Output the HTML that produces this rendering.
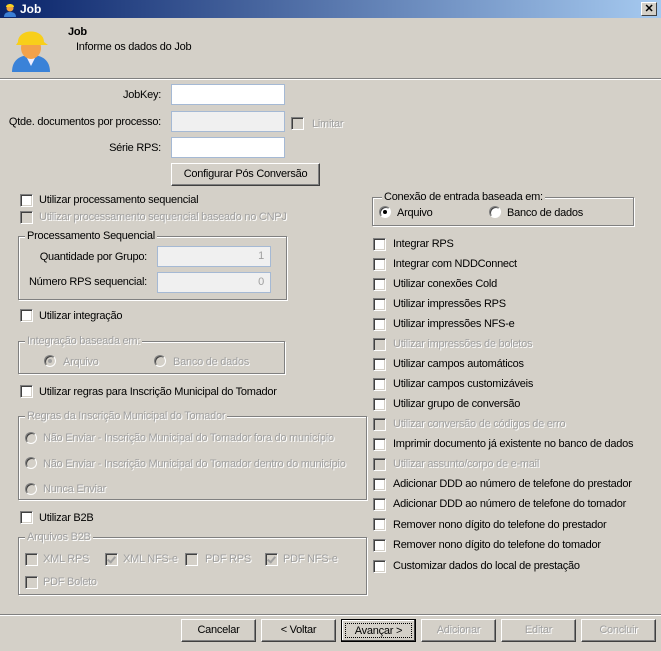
<!DOCTYPE html>
<html><head><meta charset="utf-8"><style>
*{box-sizing:border-box;margin:0;padding:0}
body{width:661px;height:651px;background:#d4d0c8;font-family:"Liberation Sans",Tahoma,sans-serif;font-size:11px;letter-spacing:-0.25px;color:#000;position:relative;overflow:hidden}
.a{position:absolute;white-space:nowrap;line-height:14px}
.dis{color:#a0a0a0;text-shadow:1px 1px #fff}
.cb{position:absolute;width:13px;height:13px;background:#fff;border:1px solid;border-color:#808080 #fff #fff #808080;box-shadow:inset 1px 1px #404040,inset -1px -1px #d4d0c8}
.cb.d{background:#d4d0c8}
.cb.chk::after{content:"";position:absolute;left:3px;top:1px;width:3px;height:6px;border:solid #a0a0a0;border-width:0 2px 2px 0;transform:rotate(40deg)}
.rb{position:absolute;width:12px;height:12px;border-radius:50%;background:#fff;border:1px solid;border-color:#808080 #fff #fff #808080;box-shadow:inset 1px 1px #404040}
.rb.d{background:#d4d0c8}
.rb.on::after{content:"";position:absolute;left:3px;top:3px;width:4px;height:4px;border-radius:50%;background:#000}
.rb.d.on::after{background:#a0a0a0}
.in{position:absolute;height:21px;background:#fff;border:1px solid #a5b9d4;text-align:right;padding:3px 6px;color:#a0a0a0;line-height:13px}
.in.g{background:#f0f0f0}
.gb{position:absolute;border:1px solid #808080;box-shadow:inset 1px 1px #fff,1px 1px #fff}
.gb .lg{position:absolute;left:6px;top:-8px;background:#d4d0c8;padding:0 2px;line-height:14px;white-space:nowrap}
.bt{position:absolute;height:23px;border:1px solid;border-color:#fff #404040 #404040 #fff;box-shadow:inset -1px -1px #808080;text-align:center;line-height:20px}
.bt.d{color:#a0a0a0;text-shadow:1px 1px #fff}
</style></head><body>
<div style="position:absolute;left:0;top:0;width:661px;height:18px;background:linear-gradient(90deg,#0a246a,#a6caf0)"></div>
<svg class="a" style="left:2px;top:1px" width="16" height="16" viewBox="0 0 16 16"><path d="M2 16c0-4 3-5 6-5s6 1 6 5z" fill="#3b7fd6"/><circle cx="8" cy="7" r="3.5" fill="#f0a040"/><path d="M4 6c0-4 8-4 8 0z" fill="#f8d020"/></svg>
<div class="a" style="left:20px;top:2px;color:#fff;font-weight:bold;font-size:12px;letter-spacing:0">Job</div>
<div style="position:absolute;left:641px;top:2px;width:16px;height:14px;background:#d4d0c8;border:1px solid;border-color:#fff #404040 #404040 #fff;font-size:11px;font-weight:bold;text-align:center;line-height:12px">✕</div>
<svg style="position:absolute;left:10px;top:24px" width="42" height="50" viewBox="0 0 42 50"><path d="M2 48c0-12 8-17 19-17s19 5 19 17z" fill="#3a82d8"/><path d="M16 32l5 10 5-10z" fill="#eef"/><ellipse cx="21" cy="24" rx="10" ry="11" fill="#f3a24a"/><path d="M8 18c0-14 26-14 26 0l4 3H6z" fill="#f8cf1a"/></svg>
<div class="a" style="left:68px;top:25px;font-weight:bold">Job</div>
<div class="a" style="left:76px;top:40px">Informe os dados do Job</div>
<div style="position:absolute;left:0;top:78px;width:661px;height:2px;border-top:1px solid #808080;border-bottom:1px solid #fff"></div>

<div class="a" style="right:500px;top:88px">JobKey:</div>
<div class="in" style="left:171px;top:84px;width:114px"></div>
<div class="a" style="right:500px;top:115px">Qtde. documentos por processo:</div>
<div class="in g" style="left:171px;top:111px;width:114px"></div>
<div class="cb d" style="left:291px;top:117px"></div>
<div class="a dis" style="left:312px;top:117px">Limitar</div>
<div class="a" style="right:500px;top:141px">Série RPS:</div>
<div class="in" style="left:171px;top:137px;width:114px"></div>
<div class="bt" style="left:171px;top:163px;width:149px">Configurar Pós Conversão</div>

<div class="cb" style="left:20px;top:194px"></div><div class="a" style="left:39px;top:193px">Utilizar processamento sequencial</div>
<div class="cb d" style="left:20px;top:211px"></div><div class="a dis" style="left:39px;top:210px">Utilizar processamento sequencial baseado no CNPJ</div>
<div class="gb" style="left:18px;top:236px;width:269px;height:64px"><div class="lg">Processamento Sequencial</div></div>
<div class="a" style="right:514px;top:250px">Quantidade por Grupo:</div>
<div class="in g" style="left:157px;top:246px;width:114px">1</div>
<div class="a" style="right:514px;top:275px">Número RPS sequencial:</div>
<div class="in g" style="left:157px;top:272px;width:114px">0</div>

<div class="cb" style="left:20px;top:309px"></div><div class="a" style="left:39px;top:309px">Utilizar integração</div>
<div class="gb" style="left:18px;top:341px;width:267px;height:33px"><div class="lg dis">Integração baseada em:</div></div>
<div class="rb d on" style="left:44px;top:355px"></div><div class="a dis" style="left:63px;top:355px">Arquivo</div>
<div class="rb d" style="left:154px;top:355px"></div><div class="a dis" style="left:173px;top:355px">Banco de dados</div>

<div class="cb" style="left:20px;top:385px"></div><div class="a" style="left:39px;top:385px">Utilizar regras para Inscrição Municipal do Tomador</div>
<div class="gb" style="left:18px;top:416px;width:349px;height:84px"><div class="lg dis">Regras da Inscrição Municipal do Tomador</div></div>
<div class="rb d" style="left:25px;top:432px"></div><div class="a dis" style="left:43px;top:431px">Não Enviar - Inscrição Municipal do Tomador fora do município</div>
<div class="rb d" style="left:25px;top:457px"></div><div class="a dis" style="left:43px;top:457px">Não Enviar - Inscrição Municipal do Tomador dentro do município</div>
<div class="rb d" style="left:25px;top:483px"></div><div class="a dis" style="left:43px;top:482px">Nunca Enviar</div>

<div class="cb" style="left:20px;top:511px"></div><div class="a" style="left:39px;top:511px">Utilizar B2B</div>
<div class="gb" style="left:18px;top:537px;width:349px;height:58px"><div class="lg dis">Arquivos B2B</div></div>
<div class="cb d" style="left:25px;top:553px"></div><div class="a dis" style="left:43px;top:552px">XML RPS</div>
<div class="cb d chk" style="left:105px;top:553px"></div><div class="a dis" style="left:123px;top:552px">XML NFS-e</div>
<div class="cb d" style="left:185px;top:553px"></div><div class="a dis" style="left:205px;top:552px">PDF RPS</div>
<div class="cb d chk" style="left:265px;top:553px"></div><div class="a dis" style="left:283px;top:552px">PDF NFS-e</div>
<div class="cb d" style="left:25px;top:576px"></div><div class="a dis" style="left:43px;top:575px">PDF Boleto</div>

<div class="gb" style="left:372px;top:197px;width:262px;height:29px"><div class="lg" style="left:9px">Conexão de entrada baseada em:</div></div>
<div class="rb on" style="left:379px;top:206px"></div><div class="a" style="left:397px;top:206px">Arquivo</div>
<div class="rb" style="left:489px;top:206px"></div><div class="a" style="left:507px;top:206px">Banco de dados</div>

<div class="cb" style="left:373px;top:238px"></div><div class="a" style="left:393px;top:237px">Integrar RPS</div>
<div class="cb" style="left:373px;top:258px"></div><div class="a" style="left:393px;top:257px">Integrar com NDDConnect</div>
<div class="cb" style="left:373px;top:278px"></div><div class="a" style="left:393px;top:277px">Utilizar conexões Cold</div>
<div class="cb" style="left:373px;top:298px"></div><div class="a" style="left:393px;top:297px">Utilizar impressões RPS</div>
<div class="cb" style="left:373px;top:318px"></div><div class="a" style="left:393px;top:317px">Utilizar impressões NFS-e</div>
<div class="cb d" style="left:373px;top:338px"></div><div class="a dis" style="left:393px;top:337px">Utilizar impressões de boletos</div>
<div class="cb" style="left:373px;top:358px"></div><div class="a" style="left:393px;top:357px">Utilizar campos automáticos</div>
<div class="cb" style="left:373px;top:378px"></div><div class="a" style="left:393px;top:377px">Utilizar campos customizáveis</div>
<div class="cb" style="left:373px;top:398px"></div><div class="a" style="left:393px;top:397px">Utilizar grupo de conversão</div>
<div class="cb d" style="left:373px;top:418px"></div><div class="a dis" style="left:393px;top:417px">Utilizar conversão de códigos de erro</div>
<div class="cb" style="left:373px;top:438px"></div><div class="a" style="left:393px;top:437px">Imprimir documento já existente no banco de dados</div>
<div class="cb d" style="left:373px;top:458px"></div><div class="a dis" style="left:393px;top:457px">Utilizar assunto/corpo de e-mail</div>
<div class="cb" style="left:373px;top:478px"></div><div class="a" style="left:393px;top:477px">Adicionar DDD ao número de telefone do prestador</div>
<div class="cb" style="left:373px;top:498px"></div><div class="a" style="left:393px;top:497px">Adicionar DDD ao número de telefone do tomador</div>
<div class="cb" style="left:373px;top:518px"></div><div class="a" style="left:393px;top:518px">Remover nono dígito do telefone do prestador</div>
<div class="cb" style="left:373px;top:539px"></div><div class="a" style="left:393px;top:538px">Remover nono dígito do telefone do tomador</div>
<div class="cb" style="left:373px;top:560px"></div><div class="a" style="left:393px;top:559px">Customizar dados do local de prestação</div>

<div style="position:absolute;left:0;top:614px;width:661px;height:2px;border-top:1px solid #808080;border-bottom:1px solid #fff"></div>
<div class="bt" style="left:181px;top:619px;width:75px">Cancelar</div>
<div class="bt" style="left:261px;top:619px;width:75px">&lt; Voltar</div>
<div class="bt" style="left:341px;top:619px;width:75px;border:1px solid #000;box-shadow:inset -1px -1px #404040,inset 1px 1px #fff"><div style="position:absolute;left:3px;top:3px;right:3px;bottom:3px;border:1px dotted #000;line-height:14px">Avançar &gt;</div></div>
<div class="bt d" style="left:421px;top:619px;width:75px">Adicionar</div>
<div class="bt d" style="left:501px;top:619px;width:75px">Editar</div>
<div class="bt d" style="left:581px;top:619px;width:75px">Concluir</div>
</body></html>
